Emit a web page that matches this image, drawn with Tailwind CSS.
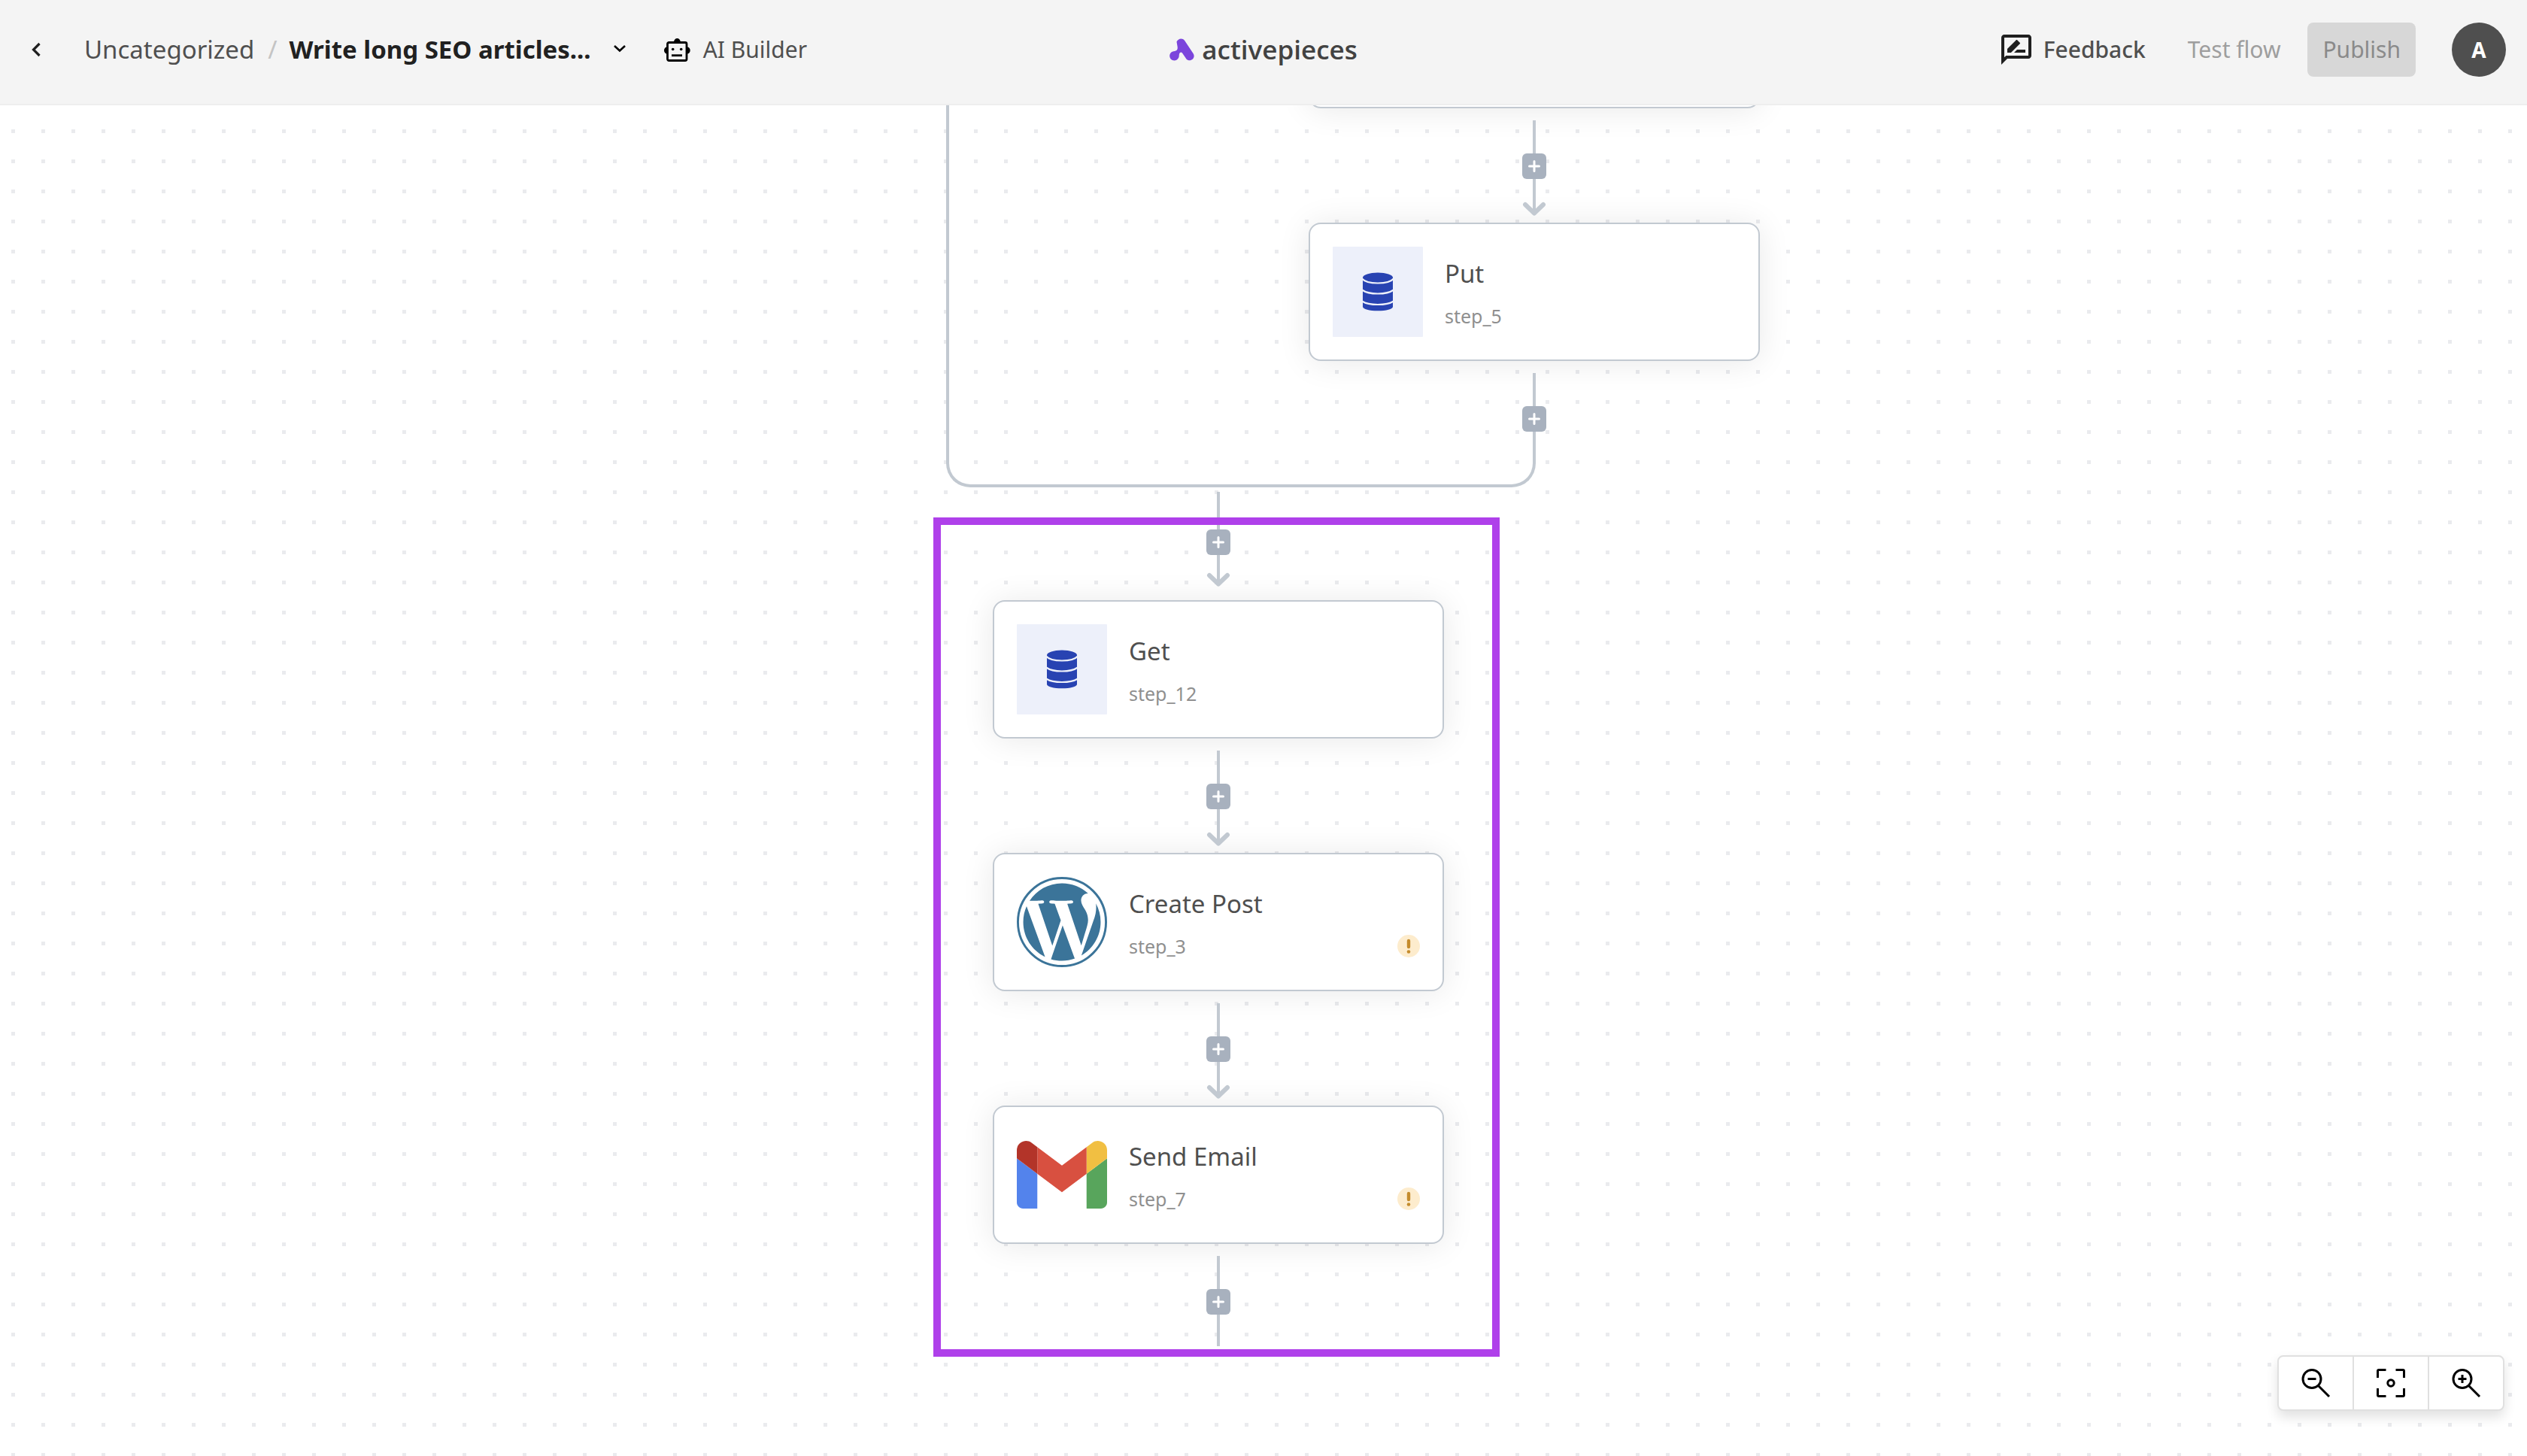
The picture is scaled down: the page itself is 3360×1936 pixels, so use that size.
<!DOCTYPE html>
<html lang="en">
<head>
<meta charset="utf-8">
<title>Write long SEO articles - Activepieces</title>
<script src="https://cdn.jsdelivr.net/npm/@tailwindcss/browser@4"></script>
</head>
<body class="flex h-screen flex-col overflow-hidden bg-white font-['Noto_Sans',sans-serif] text-[#4f4f4f]">

<svg class="hidden" aria-hidden="true">
  <symbol id="plus" viewBox="0 0 16 16"><path d="M8 1.500v13M1.500 8h13" stroke="#fff" stroke-width="3" stroke-linecap="round"/></symbol>
  <symbol id="arrow" viewBox="0 0 32 49"><path d="M16 0v45" stroke="#c2c9d1" stroke-width="4"/><path d="M4 34l12 11.500 12-11.500" fill="none" stroke="#c2c9d1" stroke-width="6" stroke-linecap="round" stroke-linejoin="round"/></symbol>
  <symbol id="arrow-short" viewBox="0 0 32 42"><path d="M16 0v38" stroke="#c2c9d1" stroke-width="4"/><path d="M4 27l12 11.500 12-11.500" fill="none" stroke="#c2c9d1" stroke-width="6" stroke-linecap="round" stroke-linejoin="round"/></symbol>
  <symbol id="database" viewBox="0 0 120 120">
    <rect width="120" height="120" rx="1" fill="#edf0fa"/>
    <path d="M40 41C40 37.500 49 34.500 60 34.500S80 37.500 80 41V80C80 83 71 85.300 60 85.300S40 83 40 80Z" fill="#2843b2"/>
    <path d="M39 42.500Q44 48.500 60 48.500T81 42.500M39 57.500Q46 62.500 60 62.500T81 57.500M39 72.500Q46 77 60 77T81 72.500" fill="none" stroke="#edf0fa" stroke-width="2.200"/>
  </symbol>
  <symbol id="warning" viewBox="0 0 30 30"><circle cx="15" cy="15" r="15" fill="#fdeccd"/><path d="M15 8v8" stroke="#c58c2d" stroke-width="4.400" stroke-linecap="round"/><circle cx="15" cy="22.500" r="2.300" fill="#c58c2d"/></symbol>
</svg>

<header class="grid h-[140px] shrink-0 grid-cols-[1fr_auto_1fr] items-center border-b-2 border-[#eee] bg-[#f4f4f4] pb-1.5">
  <nav class="flex items-center pl-10" aria-label="Breadcrumb">
    <button type="button" aria-label="Back" class="flex size-5 items-center">
      <svg class="h-5 w-4" viewBox="0 0 16 20"><path d="M12.500 2L4.500 10l8 8" fill="none" stroke="#1f1f1f" stroke-width="3.200"/></svg>
    </button>
    <a href="#" class="ml-[52px] text-[33px] leading-10">Uncategorized</a>
    <span class="ml-[18px] text-[33px] leading-10 text-[#c4c4c4]">/</span>
    <h1 class="ml-4 text-[33px] leading-10 font-bold text-[#212121]">Write long SEO articles...</h1>
    <button type="button" aria-label="Flow options" class="ml-7 flex h-5 w-5 items-center">
      <svg class="h-5 w-5" viewBox="0 0 20 20"><path d="M3 5l7 6.500 7-6.500" fill="none" stroke="#000" stroke-width="2.600"/></svg>
    </button>
    <button type="button" class="ml-12 flex items-center gap-4 text-[30px] leading-10">
      <svg class="h-8 w-[37px]" viewBox="0 0 37 32">
        <path d="M14 6a4.400 5 0 0 1 8.800 0zM5 12.500a4 4.500 0 0 0 0 9zM31.700 12.500a4 4.500 0 0 1 0 9z" fill="#000"/>
        <rect x="5.500" y="6.500" width="25.500" height="24" rx="2" fill="none" stroke="#000" stroke-width="2.800"/>
        <circle cx="12.700" cy="15.500" r="1.800"/><circle cx="23.700" cy="15.500" r="1.800"/><path d="M11 23.700h14" stroke="#000" stroke-width="2.800"/>
      </svg>
      AI Builder
    </button>
  </nav>

  <a href="#" class="flex items-center gap-2.5 font-['Open_Sans',sans-serif] text-[35px] leading-10 font-semibold text-[#424242]">
    <svg class="h-[30px] w-[33px]" viewBox="0 0 33 30" fill="#7b45dc"><path d="M9.500 4.500C11 .5 17 -1.500 20 2.800L31.800 20.500C35 26.500 28 32 22.800 28L17 19.500C15.500 17.500 14 18.500 13 20.500L12.500 25C10.500 30 5 30.700 2 27.800-1.700 23.500.8 18 5.500 17.300 9.500 16.500 11 15.500 10.700 11.500Z"/></svg>
    activepieces
  </a>

  <div class="flex items-center justify-end pr-7">
    <button type="button" class="flex items-center gap-3 text-[30px] leading-10 font-medium">
      <svg class="size-12" viewBox="0 0 24 24" fill="#1f1f1f"><path d="M20 2H4c-1.100 0-1.990.9-1.990 2L2 22l4-4h14c1.100 0 2-.9 2-2V4c0-1.100-.9-2-2-2zm0 14H5.170L4 17.170V4h16v12zm-9.500-2H18v-2h-5.500zm3.860-5.870c.2-.2.2-.51 0-.71l-1.770-1.770c-.2-.2-.51-.2-.71 0L6 11.530V14h2.470l5.890-5.870z"/></svg>
      Feedback
    </button>
    <button type="button" disabled class="ml-14 text-[30px] leading-10 text-[#9e9e9e]">Test flow</button>
    <button type="button" disabled class="ml-9 h-[72px] rounded-lg bg-[#d7d7d7] px-5 text-[30px] leading-10 text-[#8a8a8a]">Publish</button>
    <button type="button" aria-label="Account" class="ml-12 size-[72px] rounded-full bg-[#4f4f4f] text-[28px] leading-10 font-bold text-white">A</button>
  </div>
</header>

<main class="relative flex-1 overflow-hidden bg-[conic-gradient(from_90deg_at_35px_35px,#eaebee_25%,#fff_0)] bg-size-[40px_40px] bg-position-[-20px_-3px]">

  <div class="absolute top-0 left-[calc(50%-422px)] h-[508px] w-[392px] rounded-bl-[32px] border-b-4 border-l-4 border-[#c2c9d1]"></div>
  <div class="absolute top-[434px] left-[calc(50%-30px)] h-[74px] w-[392px] rounded-br-[32px] border-r-4 border-b-4 border-[#c2c9d1]"></div>

  <section class="absolute top-[-180px] left-[calc(50%+60px)] w-[600px]">
    <article class="h-[184px] rounded-2xl border-2 border-[#c2c9d1] bg-white shadow-[0_2px_44px_rgba(0,0,0,0.09)]"></article>
    <div class="relative flex h-[152px] flex-col items-center pt-4">
      <span class="h-11 w-1 bg-[#c2c9d1]"></span>
      <button type="button" aria-label="Add step" class="flex h-[34px] w-8 items-center justify-center rounded-md bg-[#a8b1be]"><svg class="size-4"><use href="#plus"/></svg></button>
      <svg class="h-[49px] w-8"><use href="#arrow"/></svg>
    </div>
    <article class="flex h-[184px] gap-[29px] rounded-2xl border-2 border-[#c2c9d1] bg-white p-[30px] shadow-[0_2px_44px_rgba(0,0,0,0.09)]">
      <svg class="size-[120px]"><use href="#database"/></svg>
      <div class="flex flex-1 flex-col gap-3 pt-3.5">
        <h2 class="text-[33px] leading-11">Put</h2>
        <p class="text-[25px] leading-11 text-[#8f8f8f]">step_5</p>
      </div>
    </article>
    <div class="relative flex flex-col items-center pt-4">
      <span class="h-11 w-1 bg-[#c2c9d1]"></span>
      <button type="button" aria-label="Add step" class="flex h-[34px] w-8 items-center justify-center rounded-md bg-[#a8b1be]"><svg class="size-4"><use href="#plus"/></svg></button>
    </div>
  </section>

  <section class="absolute top-[514px] left-[calc(50%-360px)] w-[600px]">
    <div class="relative flex h-36 flex-col items-center">
      <span class="h-[50px] w-1 bg-[#c2c9d1]"></span>
      <button type="button" aria-label="Add step" class="flex h-[34px] w-8 items-center justify-center rounded-md bg-[#a8b1be]"><svg class="size-4"><use href="#plus"/></svg></button>
      <svg class="h-[42px] w-8"><use href="#arrow-short"/></svg>
    </div>
    <article class="flex h-[184px] gap-[29px] rounded-2xl border-2 border-[#c2c9d1] bg-white p-[30px] shadow-[0_2px_44px_rgba(0,0,0,0.09)]">
      <svg class="size-[120px]"><use href="#database"/></svg>
      <div class="flex flex-1 flex-col gap-3 pt-3.5">
        <h2 class="text-[33px] leading-11">Get</h2>
        <p class="text-[25px] leading-11 text-[#8f8f8f]">step_12</p>
      </div>
    </article>
    <div class="relative flex h-[152px] flex-col items-center pt-4">
      <span class="h-11 w-1 bg-[#c2c9d1]"></span>
      <button type="button" aria-label="Add step" class="flex h-[34px] w-8 items-center justify-center rounded-md bg-[#a8b1be]"><svg class="size-4"><use href="#plus"/></svg></button>
      <svg class="h-[49px] w-8"><use href="#arrow"/></svg>
    </div>
    <article class="flex h-[184px] gap-[29px] rounded-2xl border-2 border-[#c2c9d1] bg-white p-[30px] shadow-[0_2px_44px_rgba(0,0,0,0.09)]">
      <svg class="size-[120px]" viewBox="8 8 496 496" fill="#3b7499">
        <circle cx="256" cy="256" r="242" fill="none" stroke="#3b7499" stroke-width="12"/>
        <path d="M61.700 169.400l101.500 278C92.200 413 43.300 340.200 43.300 256c0-30.900 6.600-60.100 18.400-86.600zm337.900 75.900c0-26.300-9.400-44.500-17.500-58.700-10.800-17.500-20.900-32.400-20.900-49.900 0-19.600 14.800-37.800 35.700-37.800.9 0 1.800.1 2.800.2-37.900-34.700-88.300-55.900-143.700-55.900-74.300 0-139.700 38.100-177.800 95.900 5 .2 9.700.3 13.700.3 22.200 0 56.700-2.700 56.700-2.700 11.500-.7 12.800 16.200 1.400 17.500 0 0-11.500 1.300-24.300 2l77.500 230.400L249.800 247l-33.100-90.800c-11.500-.7-22.300-2-22.300-2-11.500-.7-10.100-18.200 1.300-17.500 0 0 35.100 2.700 56 2.700 22.200 0 56.700-2.700 56.700-2.700 11.500-.7 12.800 16.200 1.400 17.500 0 0-11.500 1.300-24.300 2l76.900 228.700 21.200-70.900c9-29.400 16-50.500 16-68.700zm-139.900 29.300l-63.800 185.500c19.100 5.600 39.200 8.700 60.100 8.700 24.800 0 48.500-4.300 70.600-12.100-.6-.9-1.100-1.900-1.500-2.900l-65.400-179.200zm183-120.700c.9 6.800 1.400 14 1.400 21.900 0 21.600-4 45.800-16.200 76.200l-65 187.900C426.200 403 468.700 334.500 468.700 256c0-37-9.400-71.800-26-102.100z"/>
      </svg>
      <div class="flex flex-1 flex-col gap-3 pt-3.5">
        <h2 class="text-[33px] leading-11">Create Post</h2>
        <div class="flex items-center justify-between">
          <p class="text-[25px] leading-11 text-[#8f8f8f]">step_3</p>
          <svg class="size-[30px]" role="img" aria-label="Incomplete settings"><use href="#warning"/></svg>
        </div>
      </div>
    </article>
    <div class="relative flex h-[152px] flex-col items-center pt-4">
      <span class="h-11 w-1 bg-[#c2c9d1]"></span>
      <button type="button" aria-label="Add step" class="flex h-[34px] w-8 items-center justify-center rounded-md bg-[#a8b1be]"><svg class="size-4"><use href="#plus"/></svg></button>
      <svg class="h-[49px] w-8"><use href="#arrow"/></svg>
    </div>
    <article class="flex h-[184px] gap-[29px] rounded-2xl border-2 border-[#c2c9d1] bg-white p-[30px] shadow-[0_2px_44px_rgba(0,0,0,0.09)]">
      <svg class="size-[120px]" viewBox="52 31 88 88">
        <path fill="#5383ec" d="M58 108h14V74L52 59v43c0 3.320 2.690 6 6 6"/>
        <path fill="#58a55c" d="M120 108h14c3.320 0 6-2.690 6-6V59l-20 15"/>
        <path fill="#f1bf42" d="M120 48v26l20-15v-8c0-7.420-8.470-11.650-14.400-7.200"/>
        <path fill="#d85040" d="M72 74V48l24 18 24-18v26L96 92"/>
        <path fill="#b33429" d="M52 51v8l20 15V48l-5.600-4.200c-5.940-4.450-14.400-.22-14.400 7.200"/>
      </svg>
      <div class="flex flex-1 flex-col gap-3 pt-3.5">
        <h2 class="text-[33px] leading-11">Send Email</h2>
        <div class="flex items-center justify-between">
          <p class="text-[25px] leading-11 text-[#8f8f8f]">step_7</p>
          <svg class="size-[30px]" role="img" aria-label="Incomplete settings"><use href="#warning"/></svg>
        </div>
      </div>
    </article>
    <div class="relative flex flex-col items-center pt-4">
      <span class="h-11 w-1 bg-[#c2c9d1]"></span>
      <button type="button" aria-label="Add step" class="flex h-[34px] w-8 items-center justify-center rounded-md bg-[#a8b1be]"><svg class="size-4"><use href="#plus"/></svg></button>
      <span class="h-[42px] w-1 bg-[#c2c9d1]"></span>
    </div>
  </section>

  <div class="pointer-events-none absolute top-[548px] left-[calc(50%-439px)] h-[1116px] w-[753px] border-10 border-[#af40ea]"></div>

  <div class="absolute right-[30px] bottom-[60px] flex h-[74px] divide-x-2 divide-[#e0e0e0] rounded-lg border-2 border-[#e0e0e0] bg-white shadow-[0_8px_16px_rgba(0,0,0,0.12)]">
    <button type="button" aria-label="Zoom out" class="flex w-[100px] items-center justify-center">
      <svg class="size-10" viewBox="0 0 40 40" fill="none" stroke="#000" stroke-width="3"><circle cx="15" cy="14.500" r="12"/><path d="M9.500 14.500h11M23.500 23.500L38 38"/></svg>
    </button>
    <button type="button" aria-label="Fit to screen" class="flex w-[100px] items-center justify-center">
      <svg class="size-10" viewBox="0 0 40 40" fill="none" stroke="#000" stroke-width="3"><path d="M2.500 13V4q0-1.500 1.500-1.500h9.500M26.500 2.500H36q1.500 0 1.500 1.500v9M37.500 27v9q0 1.500-1.500 1.500h-9.500M13.500 37.500H4q-1.500 0-1.500-1.500v-9"/><circle cx="20" cy="20" r="4.200"/></svg>
    </button>
    <button type="button" aria-label="Zoom in" class="flex w-[98px] items-center justify-center">
      <svg class="size-10" viewBox="0 0 40 40" fill="none" stroke="#000" stroke-width="3"><circle cx="15" cy="14.500" r="12"/><path d="M9.500 14.500h11M15 9v11M23.500 23.500L38 38"/></svg>
    </button>
  </div>
</main>
</body>
</html>
